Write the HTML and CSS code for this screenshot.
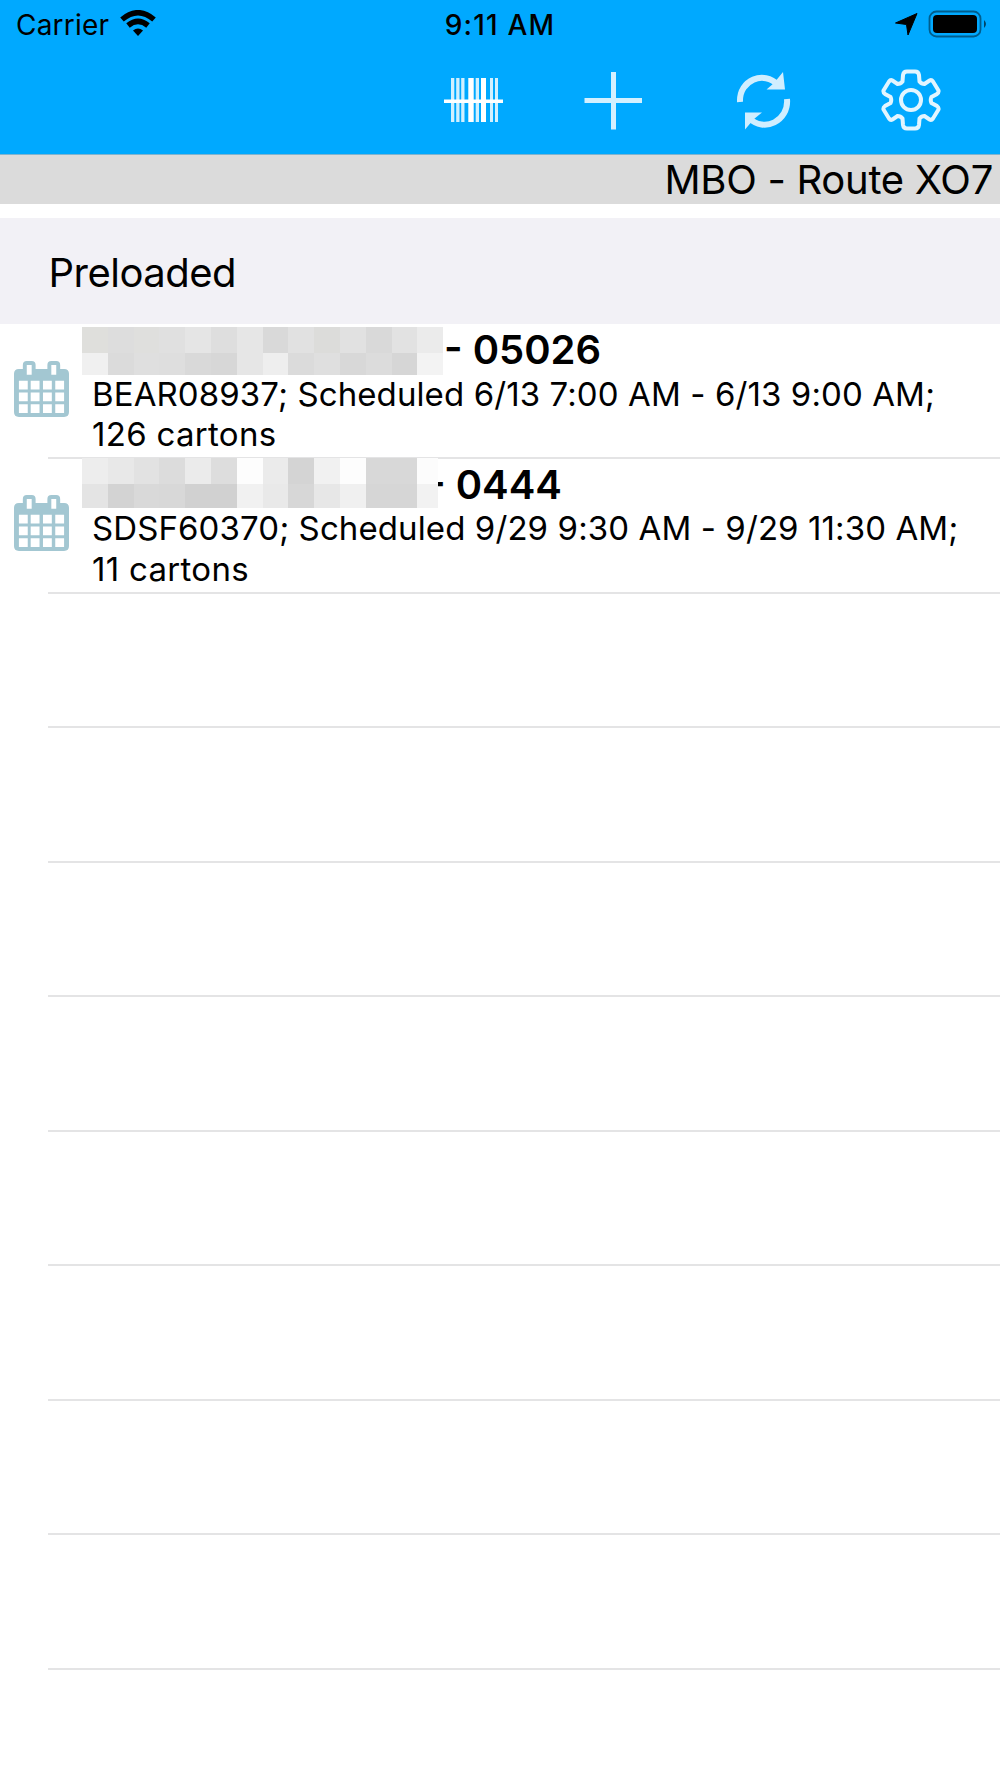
FILE: index.html
```
<!DOCTYPE html>
<html lang="en">

<head>
    <meta charset="UTF-8">
    <meta name="viewport" content="width=device-width, initial-scale=1.0">
    <title>Route</title>
    <link rel="stylesheet" href="styles.css">
</head>

<body>
    <div class="header">
        <div class="status">
            <div class="status_left">
                <span class="carrier">Carrier</span>
                <svg class="wifi" width="36" height="28" viewBox="0 0 36 28">
                    <path d="M2 9.500Q18 -4 34 9.500" fill="none" stroke="#000" stroke-width="5.500" />
                    <path d="M8 15.500Q18 7.300 28 15.500" fill="none" stroke="#000" stroke-width="5.500" />
                    <path d="M13 20.500Q18 16.500 23 20.500L18 26z" />
                </svg>
            </div>
            <span class="time">9:11 AM</span>
            <div class="status_right">
                <svg class="arrow" width="23" height="23" viewBox="0 0 23 23">
                    <path d="M22 .5L13 22L11.500 11.500L.5 10z" stroke="#000" stroke-linejoin="round" />
                </svg>
                <svg class="battery" width="60" height="28" viewBox="0 0 60 28">
                    <rect x="1.500" y="1.500" width="51" height="25" rx="7" fill="none" stroke="#000" stroke-opacity=".45" stroke-width="1.800" />
                    <rect x="5" y="5" width="44" height="18" rx="4" />
                    <path d="M56 10Q60 14 56 18z" fill-opacity=".6" />
                </svg>
            </div>
        </div>
        <div class="tools">
            <svg class="scan" width="60" height="60" viewBox="0 0 60 60">
                <path d="M8 8h3.300v44h-3.300zM13.200 8h3.300v44h-3.300zM18.200 8h3.300v44h-3.300zM32.700 8h3.300v44h-3.300zM47 8h3v44h-3zM52 8h3v44h-3z" opacity=".82" />
                <path d="M25.300 8h5.400v44h-5.400zM38 8h5v44h-5zM1 29.500h59v3.500h-59z" />
            </svg>
            <svg class="plus" width="60" height="60" viewBox="0 0 60 60">
                <path d="M1.500 30.500H59M30.500 2V59.500" fill="none" stroke="#d4f0ff" stroke-width="5" />
            </svg>
            <svg class="sync" width="56" height="60" viewBox="0 0 56 60">
                <path d="M4 31C3 9 28 -1 42 14M51 28C53 50 28 62 13 47" fill="none" stroke="#d0eeff" stroke-width="6" />
                <path d="M47 1L49 18.500L30.500 18.500L38 12zM9 58.500V41.500H26L18 48z" fill="#d0eeff" />
            </svg>
            <svg class="gear" width="60" height="62" viewBox="-30 -31 60 62">
                <path d="M-8 -25Q-7.500 -28.500 -4 -28.500H4Q7.500 -28.500 8 -25L8.500 -18.500Q10.500 -16 13.500 -16L18.500 -19.500Q20.500 -20.500 22 -18.500L27.500 -9.500Q28 -7.500 26 -6L20.500 -3Q19 0 20.500 3L26 6Q28 7.500 27.500 9.500L22 18.500Q20.500 20.500 18.500 19.500L13.500 16Q10.500 16 8.500 18.500L8 25Q7.500 28.500 4 28.500H-4Q-7.500 28.500 -8 25L-8.500 18.500Q-10.500 16 -13.500 16L-18.500 19.500Q-20.500 20.500 -22 18.500L-27.500 9.500Q-28 7.500 -26 6L-20.500 3Q-19 0 -20.500 -3L-26 -6Q-28 -7.500 -27.500 -9.500L-22 -18.500Q-20.500 -20.500 -18.500 -19.500L-13.500 -16Q-10.500 -16 -8.500 -18.500z" />
                <circle r="10" />
            </svg>
        </div>
    </div>

    <div class="route"><span>MBO - Route XO7</span></div>
    <div class="section"><span>Preloaded</span></div>

    <ul class="list">
        <li class="row">
            <svg class="calendar" width="55" height="57" viewBox="0 0 56 58">
                <use href="#cal" />
            </svg>
            <div class="info">
                <h2 class="name first">- 05026</h2>
                <p class="time_line">BEAR08937; Scheduled 6/13 7:00 AM - 6/13 9:00 AM;</p>
                <p class="cartons">126 cartons</p>
            </div>
            <div class="mask mask_first"></div>
        </li>
        <li class="row">
            <svg class="calendar" width="55" height="57" viewBox="0 0 56 58">
                <g id="cal">
                    <path fill="#a3c7d2" d="M5 8H9V4Q9 0 13 0H18Q22 0 22 4V8H34V4Q34 0 38 0H43Q47 0 47 4V8H51Q56 8 56 13V52Q56 57 51 57H5Q0 57 0 52V13Q0 8 5 8z" />
                    <path fill="#fff" d="M13 4h5v10h-5zM38 4h5v10h-5z" />
                    <path fill="#fff" d="M5 20h9v9h-9zM17 20h9v9h-9zM29.500 20h9v9h-9zM42 20h9v9h-9zM5 32h9v9h-9zM17 32h9v9h-9zM29.500 32h9v9h-9zM42 32h9v9h-9zM5 44h9v9h-9zM17 44h9v9h-9zM29.500 44h9v9h-9zM42 44h9v9h-9z" />
                </g>
            </svg>
            <div class="info">
                <h2 class="name second">- 0444</h2>
                <p class="time_line">SDSF60370; Scheduled 9/29 9:30 AM - 9/29 11:30 AM;</p>
                <p class="cartons">11 cartons</p>
            </div>
            <div class="mask mask_second"></div>
        </li>
        <li class="row"></li>
        <li class="row"></li>
        <li class="row"></li>
        <li class="row"></li>
        <li class="row"></li>
        <li class="row"></li>
        <li class="row"></li>
        <li class="row"></li>
    </ul>

    <script>
        // grey tiles covering the customer names, two lines each
        let masks = {
            '.mask_first': [
                ['dfdfdc', 'dddddd', 'dfdfdd', 'e0e0e0', 'e5e5e5', 'dedede', 'e6e6e6', 'd9d9d9', 'e1e1e1', 'dcdcda', 'e1e1e1', 'd9d9d9', 'e2e2e2', 'ebebeb'],
                ['f0f0f0', 'dbdbdb', 'dfdfdf', 'dedede', 'd9d9d9', 'd7d7d7', 'e6e6e6', 'eeeeee', 'dbdbdb', 'dfdfdf', 'd8d8d8', 'dcdcdc', 'd6d6d6', 'f3f3f3']
            ],
            '.mask_second': [
                ['ededed', 'e8e8e8', 'e2e2e2', 'dcdcdc', 'ebebeb', 'dddddd', 'fdfdfd', 'ebebeb', 'd4d4d4', 'f1f1f1', 'fdfdfd', 'd8d8d8', 'd8d8d8', 'fcfcfc'],
                ['e4e4e4', 'd3d3d3', 'd9d9d9', 'd8d8d8', 'd1d1d1', 'd1d1d1', 'f1f1f1', 'e9e9e9', 'd7d7d7', 'e7e7e7', 'f0f0f0', 'd6d6d6', 'd6d6d6', 'f2f2f2']
            ]
        }
        for (let name in masks) {
            let box = document.querySelector(name)
            masks[name].forEach(function (line) {
                line.forEach(function (color) {
                    let tile = document.createElement('i')
                    tile.style.background = '#' + color
                    box.appendChild(tile)
                })
            })
        }
    </script>
</body>

</html>
```
FILE: styles.css
```
* {
    margin: 0;
    padding: 0;
    box-sizing: border-box;
}

body {
    width: 1000px;
    height: 1778px;
    overflow: hidden;
    background: #fff;
    color: #000;
    font-family: Inter, "Liberation Sans", sans-serif;
}

svg {
    display: block;
    flex: none;
}

.header {
    height: 155px;
    background: #00a9ff;
    border-bottom: 1px solid #7fb4d0;
}

.status {
    display: flex;
    justify-content: space-between;
    height: 50px;
    line-height: 51px;
    font-size: 28px;
}

.status_left,
.status_right {
    display: flex;
    width: 400px;
}

.status_left {
    padding-left: 16px;
}

.carrier {
    width: 104px;
    letter-spacing: 0.2px;
}

.wifi {
    margin-top: 10px;
}

.time {
    font-weight: 500;
    letter-spacing: 1.2px;
    white-space: nowrap;
}

.status_right {
    justify-content: flex-end;
    padding-right: 12px;
}

.arrow {
    margin-top: 13px;
    margin-right: 10px;
}

.battery {
    margin-top: 10px;
}

.tools {
    display: flex;
    align-items: flex-start;
    padding: 20px 0 0 443px;
    fill: #fff;
}

.plus {
    margin-left: 80px;
}

.sync {
    margin: 1px 0 0 93px;
}

.gear {
    margin: -1.5px 0 0 88.5px;
    fill: none;
    stroke: #e2f5ff;
    stroke-width: 4;
}

.route {
    height: 48.5px;
    line-height: 50px;
    padding-right: 7px;
    background: #dbdbdb;
    font-size: 40px;
    letter-spacing: -0.3px;
    text-align: right;
}

.section {
    height: 106px;
    line-height: 107px;
    margin-top: 14.5px;
    padding: 1px 0 0 48.5px;
    background: #f2f1f6;
    font-size: 40px;
    letter-spacing: -0.5px;
}

.list {
    padding-top: 0.5px;
    list-style: none;
}

.row {
    display: flex;
    position: relative;
    height: 134.5px;
    padding: 2.5px 0 0 14px;
}

/* the separator is inset from the left edge */
.row::after {
    content: "";
    position: absolute;
    left: 48px;
    right: 0;
    bottom: 0;
    height: 2px;
    background: #e4e4e5;
}

.calendar {
    margin-top: 33.5px;
}

.info {
    padding-left: 23px;
    white-space: nowrap;
}

.name {
    height: 46.5px;
    line-height: 46.5px;
    font-size: 40px;
    font-weight: 600;
}

.first {
    padding-left: 352px;
}

.second {
    padding-left: 335px;
}

.info p {
    height: 40.5px;
    line-height: 40.5px;
    font-size: 33px;
}

.time_line {
    letter-spacing: 0.1px;
}

.cartons {
    letter-spacing: 0.3px;
}

.mask {
    display: grid;
    position: absolute;
    left: 82px;
    z-index: 1;
}

.mask_first {
    top: 2.5px;
    width: 361px;
    height: 48px;
    grid-template: 26px 22px / repeat(14, 25.8px);
}

.mask_second {
    top: -1.5px;
    width: 356px;
    height: 50px;
    grid-template: 26px 24px / repeat(13, 25.8px) 20.6px;
}
```
